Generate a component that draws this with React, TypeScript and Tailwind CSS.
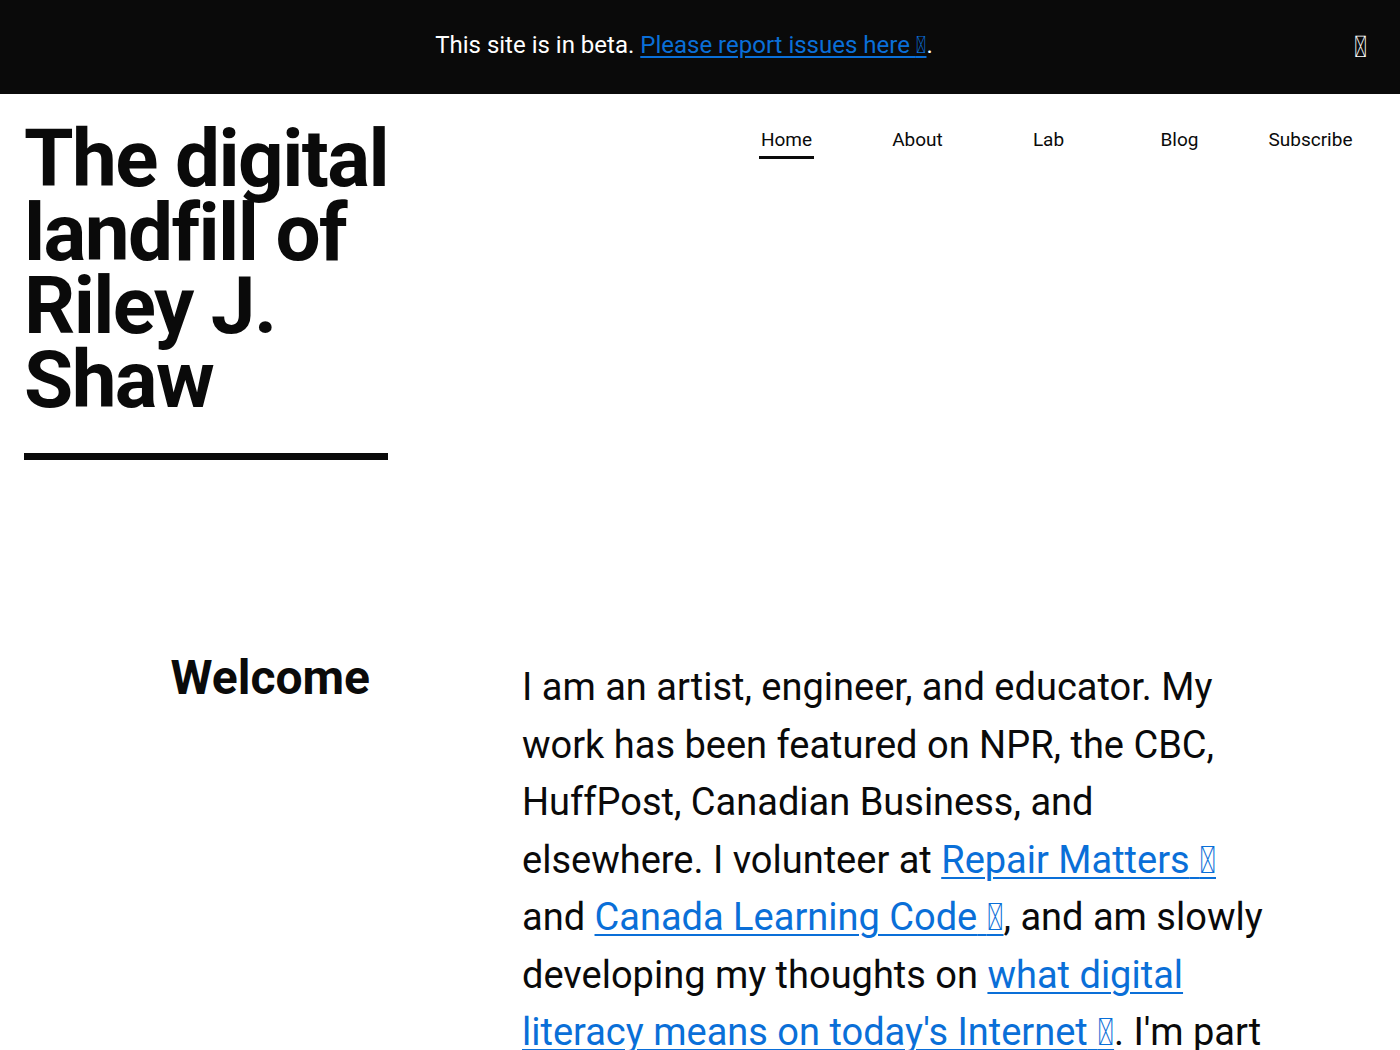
import React from 'react';

const ICON = '\uE89E';

const links = ['Home', 'About', 'Lab', 'Blog', 'Subscribe'];

function Ext({ children }: { children: React.ReactNode }) {
  return (
    <a href="#" className="text-[#0a6fd8] underline underline-offset-[4px] decoration-[2px]">
      {children}
      {' '}
      {ICON}
    </a>
  );
}

export default function App() {
  return (
    <div className="min-h-screen bg-white text-[#0a0a0a] font-['Roboto',sans-serif]">
      <div className="h-[94px] bg-[#0a0a0a] flex items-center justify-center relative pb-[4px] pr-[32px]">
        <p className="text-[24px] text-white">
          This site is in beta.{' '}
          <a href="#" className="text-[#0a6fd8] underline underline-offset-[3px]">
            Please report issues here {ICON}
          </a>
          .
        </p>
        <button className="absolute right-[33px] top-[32px] text-white text-[30px] leading-none">{ICON}</button>
      </div>

      <header className="flex items-start justify-between pl-6 pr-[24px]">
        <div className="pt-[29px]">
          <h1 className="text-[80px] font-bold leading-[73.5px] tracking-[-1.6px] w-[400px]">
            The digital
            <br />
            landfill of
            <br />
            Riley J.
            <br />
            Shaw
          </h1>
          <div className="mt-[36px] h-[7px] w-[364px] bg-[#0a0a0a]" />
        </div>
        <nav className="flex items-start pt-[34px]">
          {links.map((l, i) => (
            <a key={l} href="#" className="w-[131px] flex justify-center text-[19px] leading-[24px]">
              <span className={i === 0 ? 'border-b-[3px] border-[#0a0a0a] pb-[4px] px-[2px]' : 'pb-[4px]'}>{l}</span>
            </a>
          ))}
        </nav>
      </header>

      <main className="grid grid-cols-[370px_750px] gap-x-[152px] mt-[199px]">
        <h2 className="text-right text-[48px] font-bold leading-none -mt-[5px]">Welcome</h2>
        <p className="text-[38px] leading-[57.5px]">
          I am an artist, engineer, and educator. My work has been featured on NPR, the CBC, HuffPost, Canadian Business,
          and elsewhere. I volunteer at <Ext>Repair Matters</Ext> and <Ext>Canada Learning Code</Ext>, and am slowly
          developing my thoughts on <Ext>what digital literacy means on today's Internet</Ext>. I'm part of a
          community of makers and educators.
        </p>
      </main>
    </div>
  );
}
